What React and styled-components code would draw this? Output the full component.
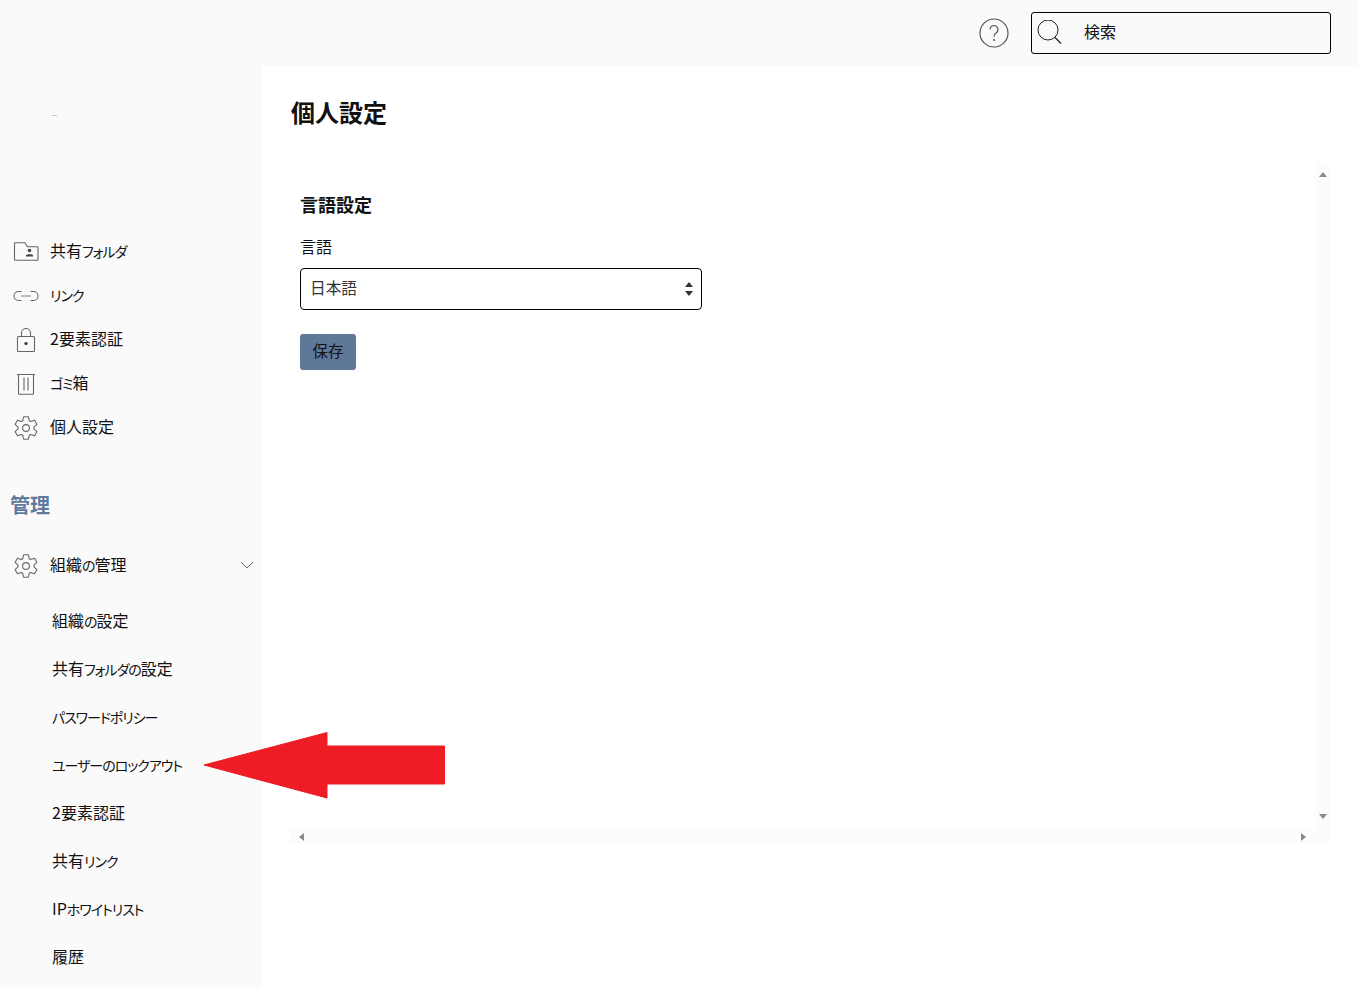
import styled, { createGlobalStyle } from "styled-components";

const GlobalStyle = createGlobalStyle`
  html, body {
    margin: 0;
    height: 100%;
    overflow: hidden;
    background: #fff;
  }
  body {
    font-family: "Noto Sans CJK JP", "Noto Sans", sans-serif;
    font-feature-settings: "palt";
    color: #111;
  }
`;

const Page = styled.div`
  position: relative;
  display: grid;
  grid-template-columns: 262px 1fr;
  grid-template-rows: 66px 1fr;
  width: 1358px;
  height: 988px;
  overflow: hidden;
  background: #fafafa;
`;

const TopBar = styled.header`
  grid-column: 1 / 3;
  display: flex;
  align-items: center;
  justify-content: flex-end;
  gap: 22px;
  padding: 0 27px 0 0;
`;

const SearchBox = styled.label`
  display: flex;
  align-items: center;
  width: 300px;
  height: 42px;
  box-sizing: border-box;
  padding: 0 12px 0 5px;
  border: 1px solid #000;
  border-radius: 3px;
`;

const SearchInput = styled.input`
  flex: 1;
  min-width: 0;
  margin-left: 21px;
  border: 0;
  outline: 0;
  padding: 0 0 4px;
  background: transparent;
  font: inherit;
  font-size: 16px;
  font-feature-settings: "palt";
  &::placeholder {
    color: #111;
    opacity: 1;
  }
`;

const Sidebar = styled.nav`
  display: flex;
  flex-direction: column;
  padding-top: 49px;
`;

const LogoDash = styled.div`
  width: 5px;
  height: 1px;
  margin: 0 0 113px 52px;
  background: #b9c0d8;
`;

const NavRow = styled.a`
  display: flex;
  align-items: center;
  height: 44px;
  box-sizing: border-box;
  padding: 0 0 2px 13px;
  font-size: 16px;
  color: #111;
`;

const IconSlot = styled.span`
  display: flex;
  align-items: center;
  justify-content: center;
  width: 26px;
  height: 26px;
  margin: 4px 11px 0 0;
`;

const Kana = styled.span`
  font-size: 14px;
  letter-spacing: -1.05px;
`;

const SectionTitle = styled.h2`
  margin: 39px 0 0;
  padding-left: 10px;
  height: 34px;
  line-height: 34px;
  font-size: 20px;
  font-weight: 700;
  color: #5f7a9f;
`;

const GroupRow = styled(NavRow)`
  margin-top: 19px;
  height: 48px;
  padding-right: 8px;
`;

const Chevron = styled.svg`
  margin: 2px 0 0 auto;
`;

const SubList = styled.div`
  display: flex;
  flex-direction: column;
  padding-top: 7px;
`;

const SubRow = styled.a`
  display: flex;
  align-items: center;
  height: 48px;
  padding-left: 52px;
  font-size: 16px;
  color: #111;
`;

const Main = styled.main`
  display: flex;
  flex-direction: column;
  background: #fff;
  padding: 0 28px;
`;

const PageTitle = styled.h1`
  margin: 28px 0 0 1px;
  height: 36px;
  line-height: 36px;
  font-size: 24px;
  font-weight: 700;
  color: #111;
`;

const ScrollArea = styled.div`
  display: grid;
  grid-template-columns: 1fr 15px;
  grid-template-rows: 667px 15px;
  margin-top: 32px;
  width: 1040px;
`;

const Content = styled.section`
  padding: 27px 0 0 10px;
`;

const SectionHeading = styled.h3`
  margin: 0;
  height: 30px;
  line-height: 30px;
  font-size: 18px;
  font-weight: 700;
  color: #111;
`;

const FieldLabel = styled.label`
  display: block;
  margin-top: 15px;
  height: 24px;
  line-height: 24px;
  font-size: 16px;
  color: #111;
`;

const SelectWrap = styled.div`
  position: relative;
  width: 402px;
  margin-top: 10px;
  &::before,
  &::after {
    content: "";
    position: absolute;
    right: 9px;
    width: 0;
    height: 0;
    border-left: 4px solid transparent;
    border-right: 4px solid transparent;
    pointer-events: none;
  }
  &::before {
    top: 14px;
    border-bottom: 5px solid #333;
  }
  &::after {
    bottom: 14px;
    border-top: 5px solid #333;
  }
`;

const LangSelect = styled.select`
  display: block;
  width: 100%;
  height: 42px;
  box-sizing: border-box;
  padding: 0 24px 4px 9px;
  border: 1px solid #000;
  border-radius: 4px;
  background: #fff;
  appearance: none;
  outline: 0;
  font: inherit;
  font-size: 15.7px;
  font-feature-settings: "palt";
  color: #333;
`;

const SaveButton = styled.button`
  display: block;
  width: 56px;
  height: 36px;
  margin-top: 24px;
  padding: 0 0 5px;
  border: 0;
  border-radius: 3px;
  background: #5f7799;
  font: inherit;
  font-size: 15.5px;
  color: #111;
`;

const Track = styled.div`
  display: flex;
  align-items: center;
  justify-content: space-between;
  flex-direction: ${({ $vertical }) => ($vertical ? "column" : "row")};
  background: #fcfcfc;
  padding: ${({ $vertical }) => ($vertical ? "10px 0 10px" : "0 9px 0 9px")};
`;

const Corner = styled.div`
  background: #fcfcfc;
`;

const ScrollArrow = styled.span`
  width: 0;
  height: 0;
  ${({ $dir }) =>
    $dir === "up" || $dir === "down"
      ? `border-left: 4.5px solid transparent; border-right: 4.5px solid transparent;`
      : `border-top: 4.5px solid transparent; border-bottom: 4.5px solid transparent;`}
  ${({ $dir }) => $dir === "up" && "border-bottom: 5px solid #8a8a8a;"}
  ${({ $dir }) => $dir === "down" && "border-top: 5px solid #8a8a8a;"}
  ${({ $dir }) => $dir === "left" && "border-right: 5px solid #8a8a8a;"}
  ${({ $dir }) => $dir === "right" && "border-left: 5px solid #8a8a8a;"}
`;

const Annotation = styled.svg`
  position: absolute;
  left: 203px;
  top: 731px;
`;

const stroke = { fill: "none", stroke: "#666", strokeWidth: 1.1 };

const FolderIcon = () => (
  <svg width="26" height="20" viewBox="0 0 26 20">
    <path
      {...stroke}
      d="M1.5 1.5a.8.8 0 0 1 .8-.8h9.7l2.5 4h9.7a.8.8 0 0 1 .8.8v12a.8.8 0 0 1-.8.8H2.3a.8.8 0 0 1-.8-.8z"
    />
    <circle cx="16.5" cy="8.5" r="1.8" fill="#444" />
    <path d="M13 14.5h7v-1.4c-1-1.2-6-1.2-7 0z" fill="#444" />
  </svg>
);

const LinkIcon = () => (
  <svg width="26" height="12" viewBox="0 0 26 12">
    <path {...stroke} d="M8.5 1.5H5.5a4.5 4.5 0 0 0 0 9h3M17.5 1.5h3a4.5 4.5 0 0 1 0 9h-3" />
    <path d="M8 6h10" stroke="#aaa" strokeWidth="1.6" />
  </svg>
);

const LockIcon = () => (
  <svg width="20" height="24" viewBox="0 0 20 24">
    <path {...stroke} d="M5.5 8.5V5a4.5 4.5 0 0 1 9 0v3.5" />
    <rect {...stroke} x="1.5" y="8.5" width="17" height="15" rx="1" />
    <circle cx="10" cy="15.5" r="1.6" fill="#333" />
  </svg>
);

const TrashIcon = () => (
  <svg width="18" height="22" viewBox="0 0 18 22">
    <path
      {...stroke}
      d="M0 1.5h18M1.5 1.5v19a.8.8 0 0 0 .8.8h13.4a.8.8 0 0 0 .8-.8v-19M7 4.5v13M11 4.5v13"
    />
  </svg>
);

// six toothed gear, outline worked out from the tooth angles
const gearPath = () => {
  const pt = (r, deg) => {
    const a = (deg * Math.PI) / 180;
    return `${(12 + r * Math.cos(a)).toFixed(2)} ${(12 + r * Math.sin(a)).toFixed(2)}`;
  };
  const points = [];
  for (let i = 0; i < 6; i++) {
    const a = -90 + i * 60;
    points.push(pt(8, a - 24), pt(11.5, a - 12), pt(11.5, a + 12), pt(8, a + 24));
  }
  return `M${points.join("L")}z`;
};

const GearIcon = () => (
  <svg width="24" height="24" viewBox="0 0 24 24">
    <path {...stroke} strokeLinejoin="round" d={gearPath()} />
    <circle {...stroke} cx="12" cy="12" r="3.4" />
  </svg>
);

// katakana and hiragana are set smaller and tighter than kanji in the reference font
const JaText = ({ children }) =>
  children
    .split(/([\u3040-\u30ff]+)/)
    .map((part, i) => (i % 2 ? <Kana key={i}>{part}</Kana> : part));

const navItems = [
  { label: "共有フォルダ", icon: <FolderIcon /> },
  { label: "リンク", icon: <LinkIcon /> },
  { label: "2要素認証", icon: <LockIcon /> },
  { label: "ゴミ箱", icon: <TrashIcon /> },
  { label: "個人設定", icon: <GearIcon /> },
];

const subItems = [
  "組織の設定",
  "共有フォルダの設定",
  "パスワードポリシー",
  "ユーザーのロックアウト",
  "2要素認証",
  "共有リンク",
  "IPホワイトリスト",
  "履歴",
];

export default function App() {
  return (
    <Page>
      <GlobalStyle />
      <TopBar>
        <svg width="30" height="30" viewBox="0 0 30 30">
          <circle cx="15" cy="15" r="14" fill="none" stroke="#555" strokeWidth="1.2" />
          <path
            d="M11 11.5a4 4 0 1 1 6.3 3.3c-1.4 1-2.3 1.8-2.3 3.7"
            fill="none"
            stroke="#555"
            strokeWidth="1.2"
          />
          <circle cx="15" cy="22" r="1" fill="#555" />
        </svg>
        <SearchBox>
          <svg width="26" height="26" viewBox="0 0 26 26">
            <circle cx="11" cy="10" r="10" fill="none" stroke="#222" strokeWidth="1" />
            <path d="M18 17.5l6 6" stroke="#222" strokeWidth="1.2" fill="none" />
          </svg>
          <SearchInput placeholder="検索" />
        </SearchBox>
      </TopBar>
      <Sidebar>
        <LogoDash />
        {navItems.map((item) => (
          <NavRow key={item.label}>
            <IconSlot>{item.icon}</IconSlot>
            <span>
              <JaText>{item.label}</JaText>
            </span>
          </NavRow>
        ))}
        <SectionTitle>管理</SectionTitle>
        <GroupRow>
          <IconSlot>
            <GearIcon />
          </IconSlot>
          <span>
            <JaText>組織の管理</JaText>
          </span>
          <Chevron width="14" height="8" viewBox="0 0 14 8">
            <path d="M1 1l6 6 6-6" fill="none" stroke="#666" strokeWidth="1" />
          </Chevron>
        </GroupRow>
        <SubList>
          {subItems.map((label) => (
            <SubRow key={label}>
              <span>
                <JaText>{label}</JaText>
              </span>
            </SubRow>
          ))}
        </SubList>
      </Sidebar>
      <Main>
        <PageTitle>個人設定</PageTitle>
        <ScrollArea>
          <Content>
            <SectionHeading>言語設定</SectionHeading>
            <FieldLabel>言語</FieldLabel>
            <SelectWrap>
              <LangSelect defaultValue="ja">
                <option value="ja">日本語</option>
              </LangSelect>
            </SelectWrap>
            <SaveButton>保存</SaveButton>
          </Content>
          <Track $vertical>
            <ScrollArrow $dir="up" />
            <ScrollArrow $dir="down" />
          </Track>
          <Track>
            <ScrollArrow $dir="left" />
            <ScrollArrow $dir="right" />
          </Track>
          <Corner />
        </ScrollArea>
      </Main>
      <Annotation width="242" height="68" viewBox="0 0 242 68">
        <path
          d="M1 34L124 1.5v13.5h117.5v38H124v14z"
          fill="#ee1c25"
          stroke="#ee1c25"
          strokeLinejoin="round"
        />
      </Annotation>
    </Page>
  );
}
